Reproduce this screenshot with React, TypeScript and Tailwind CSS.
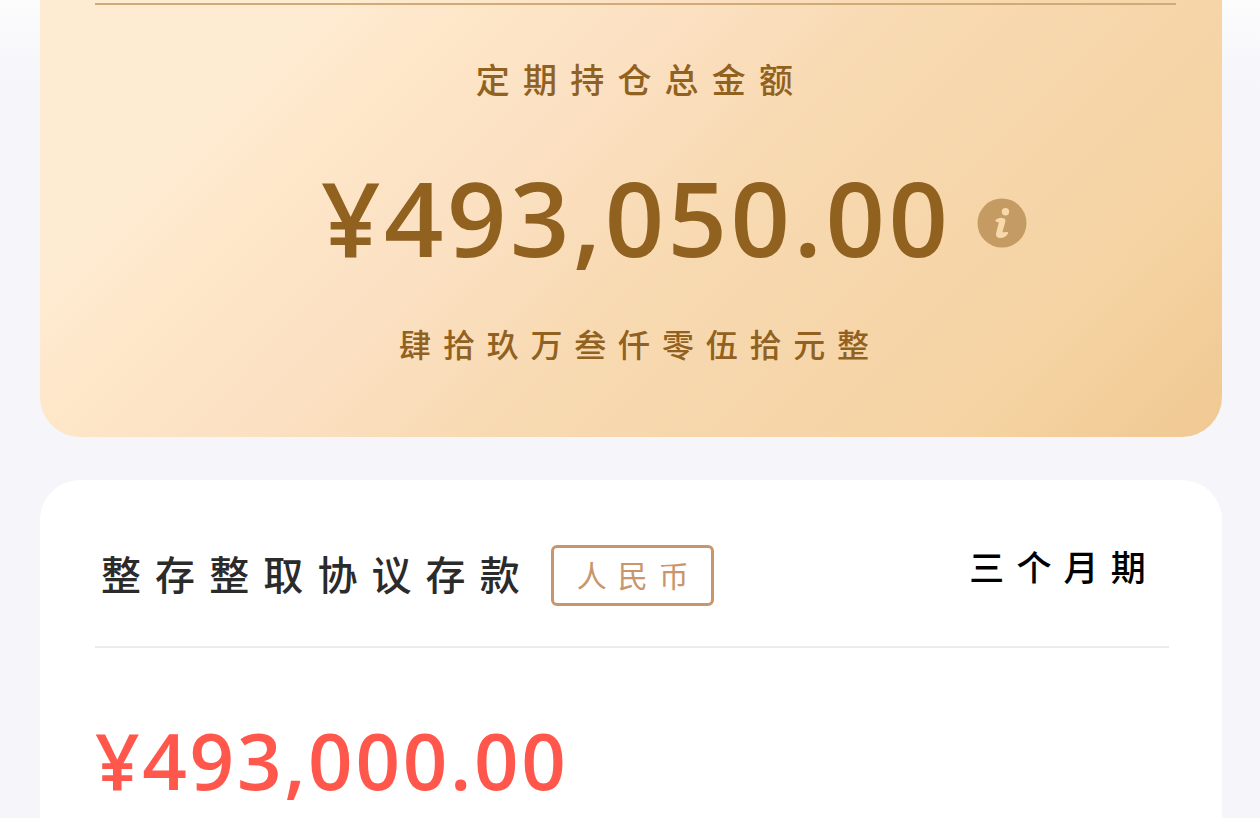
const amountFont = "font-['Open_Sans','Noto_Sans_CJK_SC',sans-serif]";

function InfoIcon() {
  return (
    <svg className="mt-[12px] ml-[26px] size-[50px] shrink-0" viewBox="0 0 50 50" aria-label="info">
      <circle cx="25" cy="25" r="24.5" fill="#c49b62" />
      <circle cx="28.5" cy="13.8" r="3.7" fill="#f8d9ac" />
      <path
        d="M19.3 22.6c2.2-1.6 4.8-2.2 7-1.5 1.2.4 1.3 1.6 1 2.7l-3.2 11.5c1.6.2 3.3-.3 6.1-.4-1.6 2.7-4 4-6.7 4.1-2.8.1-4-1.4-3.4-3.8l3.1-11.6c-1.5-.4-2.5.2-3.9-1z"
        fill="#f8d9ac"
        stroke="#f8d9ac"
        strokeWidth="2"
        strokeLinejoin="round"
      />
    </svg>
  );
}

function SummaryCard() {
  return (
    <section className="flex h-[437px] shrink-0 flex-col items-center rounded-b-[40px] bg-linear-[135deg,#feecd2_0%,#feecd2_17%,#fee6c9_27%,#fbe0c1_41%,#f8dab2_54%,#f6d5a9_72%,#f5d3a2_84%,#f1ca95_97%,#f1ca95_100%] text-[#91611f]">
      <div className="mt-[3px] ml-[9px] h-[2px] w-[1081px] shrink-0 bg-[#d0aa77]" />
      <h2 className="mt-[51px] pl-5 text-[34px] leading-[48px] font-medium tracking-[13.2px]">定期持仓总金额</h2>
      <div className="mt-[39px] flex h-[148px] w-full items-center pl-[281px]">
        <span className="text-[104px] leading-[140px] font-semibold tracking-[3.5px]">¥493,050.00</span>
        <InfoIcon />
      </div>
      <p className="mt-[30px] pl-[18px] text-[32px] leading-[48px] font-medium tracking-[11.8px]">肆拾玖万叁仟零伍拾元整</p>
    </section>
  );
}

function DepositCard() {
  return (
    <section className="mt-[43px] h-[400px] shrink-0 rounded-t-[40px] bg-white pr-[53px] pl-[55px]">
      <div className="flex h-[168px] items-center border-b-2 border-[#ebebeb] pt-6 pl-[6px]">
        <h3 className="text-[40px] leading-[60px] font-medium tracking-[14.1px] text-[#2b2b2b]">整存整取协议存款</h3>
        <span className="ml-[17px] flex h-[61px] w-[163px] items-center rounded-md border-3 border-[#c9956a] pl-[23px] text-[30px] tracking-[11px] text-[#c9956a]">
          人民币
        </span>
        <span className="mr-[11px] mb-[13px] ml-auto text-[35px] font-medium tracking-[12.2px] text-black">三个月期</span>
      </div>
      <div className="mt-[57px] text-[78px] leading-[110px] font-semibold tracking-[2.7px] text-[#ff574b]">¥493,000.00</div>
    </section>
  );
}

export default function App() {
  return (
    <main
      className={`flex h-[818px] w-[1260px] flex-col overflow-hidden bg-linear-[180deg,#fcfcfd_0px,#f5f5fa_85px] pr-[38px] pl-10 ${amountFont}`}
    >
      <SummaryCard />
      <DepositCard />
    </main>
  );
}
